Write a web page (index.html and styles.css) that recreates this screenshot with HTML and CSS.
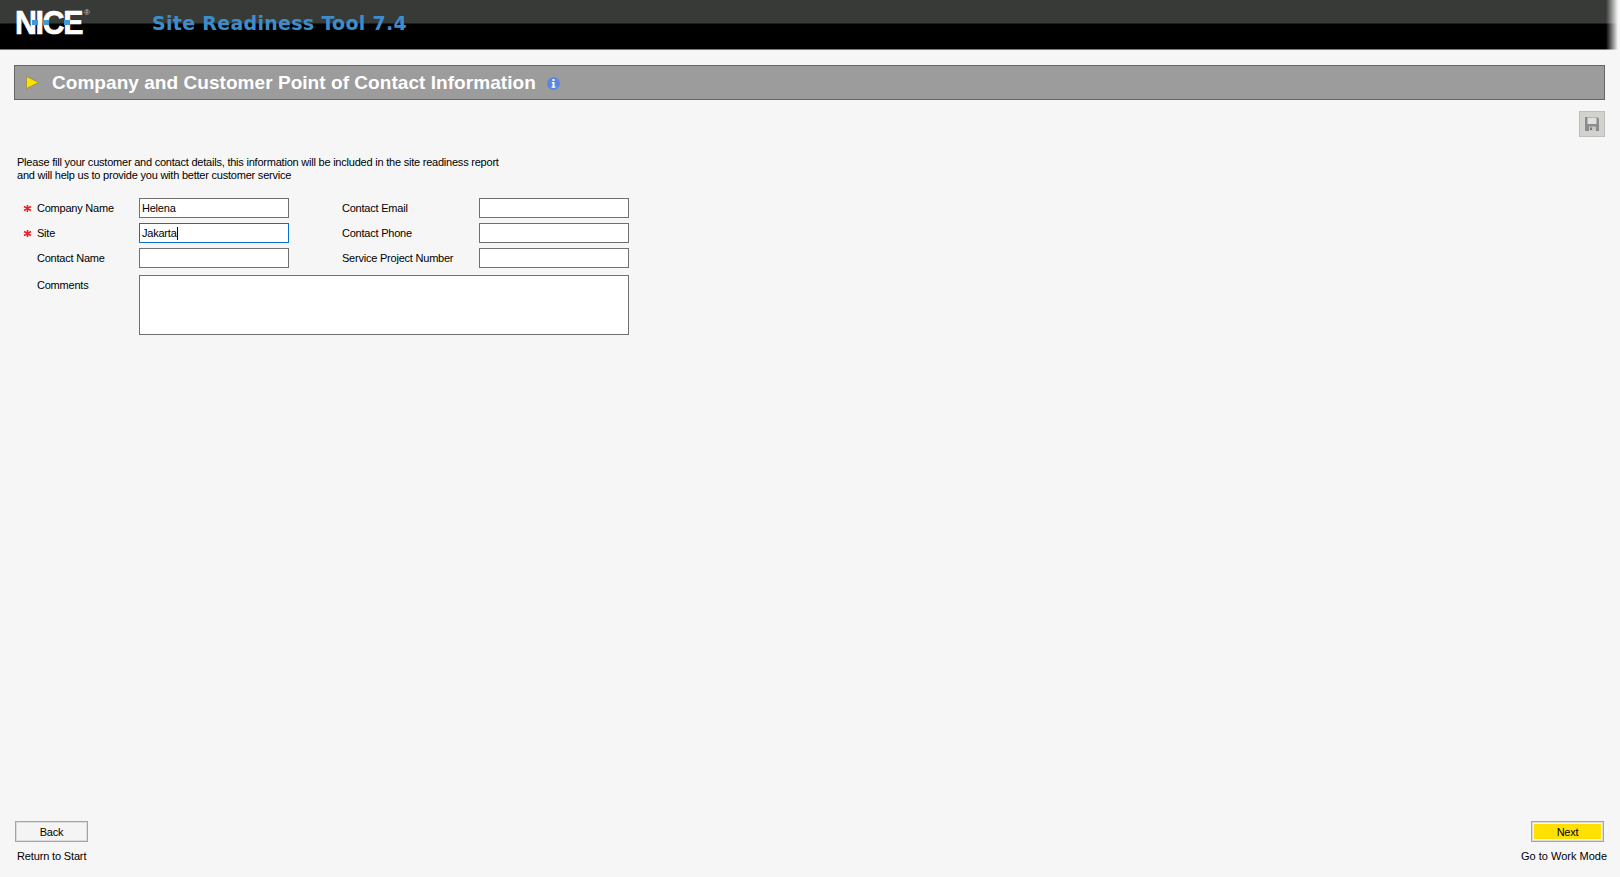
FILE: index.html
```html
<!DOCTYPE html>
<html lang="en">
<head>
    <meta charset="UTF-8">
    <meta name="viewport" content="width=device-width, initial-scale=1.0">
    <title>Site Readiness Tool 7.4</title>
    <link rel="stylesheet" href="styles.css">
</head>
<body>
    <header class="header">
        <div class="logo">
            <span class="logo-name">NICE</span>
            <span class="logo-mark">®</span>
            <i class="logo-dash dash-1"></i>
            <i class="logo-dash dash-2"></i>
            <i class="logo-dash dash-3"></i>
        </div>
        <div class="app-name">Site Readiness Tool 7.4</div>
    </header>

    <main class="content">
        <div class="title-bar">
            <svg class="title-arrow" width="13" height="13" viewBox="0 0 13 13">
                <path d="M0.5 0.5 L12.5 6.5 L0.5 12.5 Z" fill="#ffe000" stroke="#77773c" stroke-width="0.5"/>
            </svg>
            <h1>Company and Customer Point of Contact Information</h1>
            <svg class="title-info" width="13" height="13" viewBox="0 0 13 13">
                <circle cx="6.5" cy="6.5" r="6.5" fill="#5d86dc"/>
                <rect x="5.5" y="2" width="2" height="2" fill="#fff"/>
                <path d="M4.8 5 H7.5 V9.5 H8.5 V10.8 H4.6 V9.5 H5.6 V6.2 H4.8 Z" fill="#fff"/>
            </svg>
        </div>

        <div class="toolbar">
            <button class="save-btn" type="button" aria-label="Save">
                <svg width="14" height="14" viewBox="0 0 14 14">
                    <path d="M0 0 H12 L14 2 V14 H0 Z" fill="#8a8c8a"/>
                    <rect x="2.5" y="0.5" width="9" height="6.5" fill="#e0e0e0"/>
                    <rect x="4" y="9.5" width="7" height="4.5" fill="#c8c8c8"/>
                    <rect x="5" y="10.5" width="2" height="2.5" fill="#77797a"/>
                </svg>
            </button>
        </div>

        <p class="intro">Please fill your customer and contact details, this information will be included in the site readiness report<br>and will help us to provide you with better customer service</p>

        <form class="contact-form">
            <svg class="star" width="9" height="9" viewBox="0 0 9 9"><path d="M4.5 1 V8 M1 2.5 L8 6.5 M8 2.5 L1 6.5" stroke="#e8202a" stroke-width="1.6"/></svg>
            <label>Company Name</label>
            <input class="field" type="text" value="Helena">
            <label class="label-right">Contact Email</label>
            <input class="field" type="text">

            <svg class="star" width="9" height="9" viewBox="0 0 9 9"><path d="M4.5 1 V8 M1 2.5 L8 6.5 M8 2.5 L1 6.5" stroke="#e8202a" stroke-width="1.6"/></svg>
            <label>Site</label>
            <div class="field field-active">Jakarta<i class="caret"></i></div>
            <label class="label-right">Contact Phone</label>
            <input class="field" type="text">

            <span></span>
            <label>Contact Name</label>
            <input class="field" type="text">
            <label class="label-right">Service Project Number</label>
            <input class="field" type="text">

            <span></span>
            <label class="label-top">Comments</label>
            <textarea class="field comments"></textarea>
        </form>
    </main>

    <footer class="footer">
        <div class="nav-block">
            <button class="nav-btn" type="button"><span>Back</span></button>
            <p>Return to Start</p>
        </div>
        <div class="nav-block nav-next">
            <button class="nav-btn" type="button"><span>Next</span></button>
            <p>Go to Work Mode</p>
        </div>
    </footer>
</body>
</html>
```

FILE: styles.css
```css
/* page */
html, body {
    height: 100%;
}
body {
    margin: 0;
    height: 877px;
    overflow: hidden;
    display: flex;
    flex-direction: column;
    background-color: #f6f6f6;
    font-family: "Liberation Sans", Arial, sans-serif;
    font-size: 11px;
    letter-spacing: -0.22px;
    color: #000;
}

/* header */
.header {
    position: relative;
    flex: none;
    height: 49px;
    display: flex;
    align-items: center;
    background: linear-gradient(to bottom, #383a38 0, #383a38 23px, #000 24px, #000 100%);
    border-bottom: 1px solid #777;
}
.header::after {
    content: "";
    position: absolute;
    top: 0;
    right: 0;
    bottom: -1px;
    width: 14px;
    background: linear-gradient(to right, rgba(246, 246, 246, 0), #f6f6f6 85%);
}
.logo {
    position: relative;
    flex: none;
    width: 152px;
    height: 49px;
    color: #fff;
}
.logo-name {
    position: absolute;
    left: 15px;
    top: 0;
    font-size: 33px;
    font-weight: bold;
    line-height: 46px;
    letter-spacing: -1.5px;
    -webkit-text-stroke: 0.7px #fff;
    transform: scaleX(0.92);
    transform-origin: 0 50%;
}
.logo-mark {
    position: absolute;
    left: 84px;
    top: 8px;
    font-size: 8px;
    line-height: 10px;
    letter-spacing: 0;
    color: #ccc;
}
.logo-dash {
    position: absolute;
    top: 20px;
    height: 5px;
    background-color: #3f9ad6;
}
.dash-1 { left: 32px; width: 6px; }
.dash-2 { left: 43px; width: 6px; }
.dash-3 { left: 64px; width: 6px; }
.app-name {
    margin-top: -4px;
    font-family: "DejaVu Sans", Verdana, sans-serif;
    font-size: 19px;
    font-weight: bold;
    letter-spacing: 0.3px;
    color: #3f8ccb;
}

.content {
    flex: 1;
    padding: 15px 15px 0 14px;
}

/* title bar */
.title-bar {
    height: 33px;
    display: flex;
    align-items: center;
    padding-left: 11px;
    background-color: #9c9c9c;
    border: 1px solid #666;
}
.title-bar h1 {
    margin: 1px 11px 0 13px;
    font-size: 19px;
    font-weight: bold;
    letter-spacing: 0.05px;
    color: #fff;
}
.title-arrow {
    flex: none;
}
.title-info {
    flex: none;
    margin-top: 2px;
}

/* save button */
.toolbar {
    display: flex;
    justify-content: flex-end;
    margin-top: 11px;
}
.save-btn {
    width: 26px;
    height: 26px;
    padding: 0;
    display: flex;
    align-items: center;
    justify-content: center;
    background-color: #d2d2ce;
    border: 1px solid #bdbfbd;
}

.intro {
    margin: 19px 0 0 3px;
    line-height: 13px;
}

/* form */
.contact-form {
    margin: 16px 0 0 9px;
    display: grid;
    grid-template-columns: 14px 102px 150px 53px 137px 150px;
    grid-auto-rows: 20px;
    row-gap: 5px;
    align-items: center;
    width: 606px;
}
.star {
    display: block;
}
.label-right {
    grid-column: 5;
}
.field {
    box-sizing: border-box;
    width: 150px;
    height: 20px;
    margin: 0;
    padding: 0 2px;
    background-color: #fff;
    border: 1px solid #707070;
    border-radius: 0;
    outline: none;
    font-family: inherit;
    font-size: 11px;
    letter-spacing: -0.22px;
    line-height: 18px;
}
.field-active {
    border-color: #0a6fd0;
}
.caret {
    display: inline-block;
    width: 1px;
    height: 13px;
    vertical-align: -3px;
    background-color: #000;
}
.label-top {
    align-self: start;
    margin-top: 6px;
}
.comments {
    grid-column: 3 / 7;
    grid-row: span 3;
    align-self: start;
    width: 490px;
    height: 60px;
    margin-top: 2px;
    resize: none;
}

/* bottom navigation */
.footer {
    flex: none;
    height: 56px;
    display: flex;
    justify-content: space-between;
    padding: 0 14px 0 15px;
}
.nav-block p {
    margin: 7px 0 0 2px;
    line-height: 14px;
    letter-spacing: -0.15px;
    white-space: nowrap;
}
.nav-btn {
    display: block;
    box-sizing: border-box;
    width: 73px;
    height: 21px;
    padding: 2px;
    background-color: #f4f4f4;
    border: 1px solid #a4a4a4;
    box-shadow: inset 0 0 0 1px #dcdcdc;
    font-family: inherit;
    font-size: 11px;
    letter-spacing: -0.22px;
    color: #000;
}
.nav-btn span {
    display: block;
    height: 15px;
    line-height: 16px;
}
.nav-next {
    display: flex;
    flex-direction: column;
    align-items: flex-end;
}
.nav-next .nav-btn {
    margin-right: 2px;
}
.nav-next .nav-btn span {
    background-color: #ffe000;
}
.nav-next p {
    margin: 7px -1px 0 0;
    letter-spacing: 0;
}
```
